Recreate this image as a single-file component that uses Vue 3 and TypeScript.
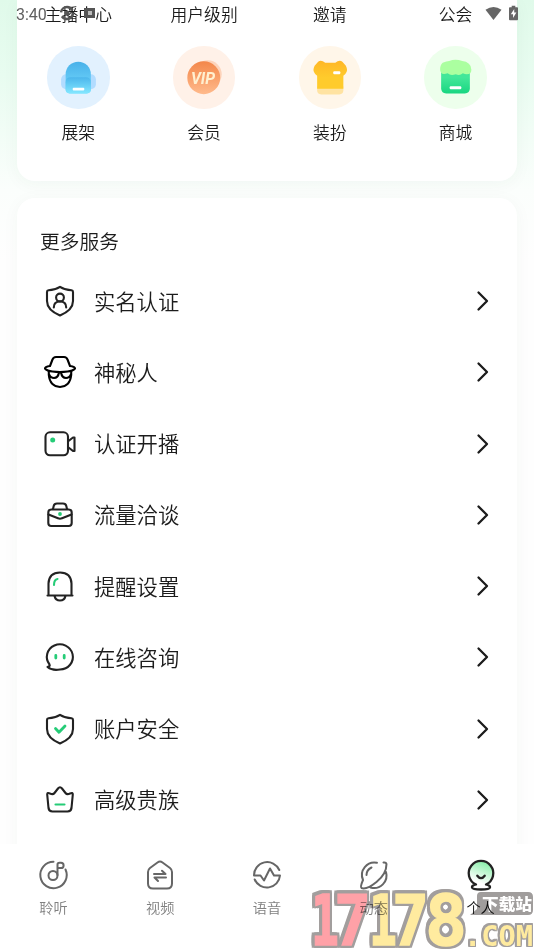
<script setup lang="ts">
interface Service { id: string; label: string }
interface Tab { id: string; label: string; active?: boolean }

const shortcuts: string[] = ['主播中心', '用户级别', '邀请', '公会']
const tools: Service[] = [
  { id: 'shelf', label: '展架' },
  { id: 'vip', label: '会员' },
  { id: 'dress', label: '装扮' },
  { id: 'shop', label: '商城' },
]
const services: Service[] = [
  { id: 'identity', label: '实名认证' },
  { id: 'mystery', label: '神秘人' },
  { id: 'camera', label: '认证开播' },
  { id: 'case', label: '流量洽谈' },
  { id: 'bell', label: '提醒设置' },
  { id: 'chat', label: '在线咨询' },
  { id: 'safe', label: '账户安全' },
  { id: 'crown', label: '高级贵族' },
]
const tabs: Tab[] = [
  { id: 'listen', label: '聆听' },
  { id: 'video', label: '视频' },
  { id: 'voice', label: '语音' },
  { id: 'moments', label: '动态' },
  { id: 'me', label: '个人', active: true },
]
</script>

<template>
  <div class="screen">
    <main class="page">
      <section class="card tools">
        <div class="grid shortcuts">
          <span v-for="s in shortcuts" :key="s">{{ s }}</span>
        </div>
        <div class="grid">
          <div v-for="t in tools" :key="t.id" class="tool">
            <span class="disc" :class="t.id">
              <svg v-if="t.id === 'shelf'" viewBox="0 0 62 62">
                <defs>
                  <linearGradient id="bagA" x1="0" y1="0" x2="0" y2="1"><stop offset="0" stop-color="#48b1e9" /><stop offset="1" stop-color="#78dcff" /></linearGradient>
                  <linearGradient id="bagB" x1="0" y1="0" x2="0" y2="1"><stop offset="0" stop-color="#4cb6ec" /><stop offset="1" stop-color="#83e7ff" /></linearGradient>
                </defs>
                <rect x="14" y="28" width="34.500" height="15" rx="5" fill="#b2dcff" />
                <path d="M18.500 28a12.500 12.500 0 0 1 25 0v15a4 4 0 0 1-4 4h-17a4 4 0 0 1-4-4z" fill="url(#bagA)" />
                <path d="M18.500 36q0-5 5-5h15q5 0 5 5v7a4 4 0 0 1-4 4h-17a4 4 0 0 1-4-4z" fill="url(#bagB)" />
                <rect x="25.500" y="41.300" width="11.500" height="2.800" rx="1" fill="#fff" />
              </svg>
              <svg v-else-if="t.id === 'vip'" viewBox="0 0 62 62">
                <defs><linearGradient id="vipA" x1="0" y1="0" x2="0" y2="1"><stop offset="0" stop-color="#f3874a" /><stop offset="1" stop-color="#ffba8c" /></linearGradient></defs>
                <circle cx="34.500" cy="28" r="13.800" fill="#fdd3ba" />
                <circle cx="30.500" cy="31.500" r="16.300" fill="url(#vipA)" />
                <text x="17.800" y="38" class="vip-text" textLength="24" lengthAdjust="spacingAndGlyphs">VIP</text>
              </svg>
              <svg v-else-if="t.id === 'dress'" viewBox="0 0 62 62">
                <defs><linearGradient id="teeA" x1="0" y1="0" x2="0" y2="1"><stop offset="0" stop-color="#ffb726" /><stop offset=".6" stop-color="#ffcb2c" /></linearGradient></defs>
                <path d="M18 40h26v4q0 4-4 4H22q-4 0-4-4z" fill="#ffe3a2" />
                <path d="M26 16.500h10q4-3 7-1l3.500 4q2 4 .5 6.500-1 2.500-3 3.500v13H18v-13q-2-1-3-3.500-1.500-2.500.5-6.500l3.500-4q3-2 7 1z" fill="url(#teeA)" />
                <rect x="34" y="25" width="7" height="3" rx="1" fill="#fff" />
              </svg>
              <svg v-else viewBox="0 0 62 62">
                <defs><linearGradient id="shopA" x1="0" y1="0" x2="0" y2="1"><stop offset=".35" stop-color="#42e799" /><stop offset="1" stop-color="#19d681" /></linearGradient></defs>
                <path d="M17 23h28.500v19q0 5-5 5H22q-5 0-5-5z" fill="url(#shopA)" />
                <path d="M18.500 16.500q4-1.500 6.500-1.500 6-2.500 13 0 4 0 6.500 2.500 2.500 2 2.500 6 0 4.500-4.500 4.500-2 0-4-1-3 3-7 1-5 2-8-1-7.500 2.500-7.500-4 0-4.500 2.500-6.500z" fill="#abffa0" />
                <rect x="25.500" y="40" width="11.500" height="3" rx="1" fill="#fff" />
              </svg>
            </span>
            <span class="tool-label">{{ t.label }}</span>
          </div>
        </div>
      </section>

      <section class="card services">
        <h2>更多服务</h2>
        <div v-for="s in services" :key="s.id" class="row">
          <svg class="icon" viewBox="0 0 36 36">
            <g v-if="s.id === 'identity'">
              <path d="M18 3.800Q23 7 29.500 7.300 31 7.500 31 9V18q0 9-13 14.500Q5 27 5 18V9q0-1.500 1.500-1.700Q13 7 18 3.800z" />
              <circle cx="18" cy="14.500" r="3.900" /><path d="M11.800 24.500q0-6 6.200-6t6.200 6" />
            </g>
            <g v-else-if="s.id === 'mystery'" class="black">
              <path d="M8 12l2.300-6Q11.300 3 14 3h8q2.700 0 3.700 3l2.300 6q5 .8 5 2.500-2 2.500-7.500 3-7.500 1-15 0Q5 17 3 14.500 3 12.800 8 12z" />
              <path d="M6.800 17v4Q8 32.500 18 33q10-.5 11.200-12v-4M7 20q1.500 4 5 4 4 0 5-5.500h2q1 5.500 5 5.500 3.500 0 5-4" />
            </g>
            <g v-else-if="s.id === 'camera'">
              <rect x="3.500" y="6.300" width="22.500" height="23" rx="4.500" /><path d="M26.500 15l4.500-3.500h1.500v13.500H31l-4.500-3.500" /><circle class="dot" cx="10.700" cy="14" r="2.500" />
            </g>
            <g v-else-if="s.id === 'case'">
              <rect x="6.300" y="12.500" width="23.400" height="16.500" rx="3" /><path d="M11 12l.7-3Q12.300 6.500 15 6.500h6q2.700 0 3.300 2.500l.7 3M6.500 17.500l9.500 3.800q2 .8 4 0l9.500-3.800" /><circle class="dot" cx="18" cy="17" r="1.900" />
            </g>
            <g v-else-if="s.id === 'bell'">
              <path d="M6.500 27V15.500Q7 4.500 18 4.500t11.500 11V27M5.500 27.500h25M12.500 28q1 4.500 5.500 4.500t5.500-4.500" /><path class="green" d="M12 17q0-5.500 3.500-6" />
            </g>
            <g v-else-if="s.id === 'chat'">
              <path d="M7.500 25.500A13 12.600 0 1 1 18 30.500Q10.500 32 5.500 28q3-.8 2-2.500z" /><path class="green thick" d="M13.800 16.500v2.500M22.200 16.500v2.500" />
            </g>
            <g v-else-if="s.id === 'safe'">
              <path d="M18 3.800Q23 7 29.500 7.300 31 7.500 31 9V18q0 9-13 14.500Q5 27 5 18V9q0-1.500 1.500-1.700Q13 7 18 3.800z" /><path class="green thick" d="M13.500 17.500l3.500 3.800 6-6.300" />
            </g>
            <g v-else>
              <path d="M6.500 26L5.200 12.500Q5.200 10 8 11.500q3 1.500 4.500-.5L16 6.500q2-2.500 4 0l3.500 4.500q1.500 2 4.500.5 3-1.500 2.800 1L29.500 26q-.5 3.500-4 3.500h-15Q7 29.500 6.500 26z" /><path class="green" d="M13.500 22.500h9" />
            </g>
          </svg>
          <span class="label">{{ s.label }}</span>
          <svg class="arrow" viewBox="0 0 14 22"><path d="M2.500 2.500l8.500 8.500-8.500 8.500" /></svg>
        </div>
      </section>
    </main>

    <nav class="tabs">
      <div v-for="t in tabs" :key="t.id" class="tab" :class="{ active: t.active }">
        <svg viewBox="0 0 36 36">
          <g v-if="t.id === 'listen'">
            <path d="M18.500 4.800A13.200 13.200 0 1 0 30.500 12.500" /><circle cx="18" cy="18.500" r="4.500" /><path d="M22.500 18V7.500q0-1.700 2-1.700h1.500a2.600 2.600 0 0 1 0 5.200h-3.500" />
          </g>
          <g v-else-if="t.id === 'video'">
            <path d="M6 15q0-2.500 2-4l7.500-5.500q2.500-1.800 5 0L28 11q2 1.500 2 4v11.500q0 5-5 5H11q-5 0-5-5z" /><path d="M12 17h11.500L20 13.700M24 20.500H12.500L16 24" />
          </g>
          <g v-else-if="t.id === 'voice'">
            <path d="M30.300 13A13.200 13.200 0 0 0 5 18.500h6.500l3.500 5 6-12 4 7h6A13.200 13.200 0 0 1 5.700 22.500" />
          </g>
          <g v-else-if="t.id === 'moments'">
            <path d="M21 5.800A12.500 12.500 0 0 0 7 23Q4 30 5.500 31q5 2 15-6T30.500 7q-.5-2-3-1.500M30 15A12.500 12.500 0 0 1 14.500 30.500M10.500 18q0-5 5-7.500" />
          </g>
          <g v-else>
            <defs><linearGradient id="meA" x1=".7" y1="0" x2=".4" y2=".9"><stop offset="0" stop-color="#83efa5" /><stop offset=".85" stop-color="#fff" /></linearGradient></defs>
            <path d="M13 27.500A12.300 12.300 0 1 1 23 27.500q4.500 1 4 3-.5 2-9 2t-9-2q-.5-2 4-3z" fill="url(#meA)" /><path d="M14.300 18.700q3.700 5 7.400 0" />
          </g>
        </svg>
        <span>{{ t.label }}</span>
      </div>
    </nav>

    <header class="status">
      <span class="clock">3:40</span>
      <svg class="notes" viewBox="0 0 38 18">
        <circle cx="8" cy="9" r="6" fill="none" stroke="#555" stroke-width="2.500" stroke-dasharray="15 4" /><circle cx="8" cy="9" r="2.500" fill="#555" />
        <path d="M25 4h11v10H25z" fill="#555" /><path d="M29 7h4v4h-4z" fill="#bbb" />
      </svg>
      <span class="spacer"></span>
      <svg class="wifi" viewBox="0 0 18 15"><path d="M.5 3.500Q9-2.500 17.500 3.500L9 14.500z" fill="#666" /></svg>
      <svg class="battery" viewBox="0 0 10 16"><path d="M1 1.500h2V0h4v1.500h2q1 0 1 1V15q0 1-1 1H1q-1 0-1-1V2.500q0-1 1-1z" fill="#666" /><path d="M5.800 3.500L2 9.500h2.500v4l3.700-6H5.800z" fill="#fff" /></svg>
    </header>

    <svg class="watermark" viewBox="0 0 226 61">
      <path d="M173 3h47q5 0 5 5v13q0 5-5 5h-58l7-6V7q0-4 4-4z" class="badge" />
      <g class="digits">
        <g class="outlined"><text class="red" x="3" y="56" textLength="28" lengthAdjust="spacingAndGlyphs">1</text></g>
        <g class="outlined"><text class="red" x="26" y="56" textLength="37" lengthAdjust="spacingAndGlyphs">7</text></g>
        <g class="outlined"><text x="61" y="56" textLength="28" lengthAdjust="spacingAndGlyphs">1</text></g>
        <g class="outlined"><text x="84" y="56" textLength="37" lengthAdjust="spacingAndGlyphs">7</text></g>
        <g class="outlined"><text x="117" y="56" textLength="42" lengthAdjust="spacingAndGlyphs">8</text></g>
      </g>
      <g class="outlined thin"><text class="com" x="156" y="57" textLength="69" lengthAdjust="spacingAndGlyphs">.COM</text></g>
      <text class="site" x="174" y="20.500" textLength="50" lengthAdjust="spacingAndGlyphs">下载站</text>
    </svg>
  </div>
</template>

<style>
html, body { margin: 0; overflow: hidden; }
</style>

<style scoped>
.screen { position: relative; box-sizing: border-box; width: 534px; height: 950px; overflow: hidden; display: flex; flex-direction: column; background: linear-gradient(180deg, #e0faea 0, #e8fcf0 75px, #fbfefc 190px, #fefefe 260px); font-family: "Noto Sans CJK SC", sans-serif; font-weight: 350; color: #1c1c1c; }
.page { flex: none; height: 844px; padding: 0 17px; overflow: hidden; box-sizing: border-box; }
.card { background: #fff; box-shadow: 0 3px 18px rgba(30, 70, 50, .04); }
.tools { height: 181px; border-radius: 0 0 18px 18px; box-sizing: border-box; }
.grid { display: grid; grid-template-columns: repeat(4, 1fr); margin: 0 -1.500px; text-align: center; }
.shortcuts { height: 46px; line-height: 28px; font-size: 16.800px; }
.tool { display: flex; flex-direction: column; align-items: center; }
.disc { width: 62.500px; height: 62.500px; border-radius: 50%; }
.disc svg { display: block; width: 100%; height: 100%; }
.shelf { background: #e2f1fe; }
.vip { background: #fff1e8; }
.dress { background: #fff6e9; }
.shop { background: #edffec; }
.vip-text { font: italic 700 15.500px Roboto, sans-serif; fill: #fff0d0; }
.tool-label { margin-top: 11px; line-height: 25px; font-size: 16.800px; }
.services { margin-top: 17px; height: 700px; border-radius: 18px 18px 0 0; padding: 0 23px; }
h2 { margin: 0; height: 67.400px; line-height: 85px; font-size: 19.800px; font-weight: inherit; }
.row { height: 71.250px; display: flex; align-items: center; }
.icon { width: 36px; height: 36px; margin-left: 2px; fill: none; stroke: #222; stroke-width: 2.100; stroke-linecap: round; stroke-linejoin: round; }
.black { stroke: #000; }
.icon .dot { fill: #25cc77; stroke: none; }
.icon .green { stroke: #25cc77; }
.icon .thick { stroke-width: 2.800; }
.label { margin-left: 16px; flex: 1; font-size: 21.300px; line-height: 32px; padding-bottom: 1px; }
.arrow { width: 14px; height: 22px; margin-right: 4px; fill: none; stroke: #1c1c1c; stroke-width: 2.300; stroke-linecap: round; stroke-linejoin: round; }
.tabs { height: 106px; display: grid; grid-template-columns: repeat(5, 1fr); background: #fff; }
.tab { display: flex; flex-direction: column; align-items: center; padding-top: 13px; font-size: 14.200px; line-height: 22px; color: #808080; }
.tab svg { width: 36px; height: 36px; margin-bottom: 3px; fill: none; stroke: #666; stroke-width: 2; stroke-linecap: round; stroke-linejoin: round; }
.tab.active { color: #111; }
.tab.active svg { stroke: #222; stroke-width: 2.300; }
.status { position: absolute; inset: 0 0 auto; height: 26px; padding: 0 16px; display: flex; align-items: center; }
.clock { width: 32px; padding-top: 3px; font: 16px/28px Roboto, sans-serif; color: #606060; }
.notes { width: 38px; height: 18px; margin-left: 11px; }
.spacer { flex: 1; }
.wifi { width: 17px; height: 15px; margin-right: 7px; }
.battery { width: 9px; height: 16px; }
.watermark { position: absolute; left: 308px; top: 889px; width: 226px; height: 61px; mix-blend-mode: multiply; }
.badge { fill: #a09d9c; }
.outlined { filter: drop-shadow(2.500px 0 0 #a29e9d) drop-shadow(-2.500px 0 0 #a29e9d) drop-shadow(0 2.500px 0 #a29e9d) drop-shadow(0 -2.500px 0 #a29e9d); }
.thin { filter: drop-shadow(1.500px 0 0 #a29e9d) drop-shadow(-1.500px 0 0 #a29e9d) drop-shadow(0 1.500px 0 #a29e9d) drop-shadow(0 -1.500px 0 #a29e9d); }
.digits text { font: 700 69px "DejaVu Sans Mono", monospace; fill: #ffeb9f; stroke: #ffeb9f; stroke-width: 1.500; }
.digits .red { fill: #ffa1a7; stroke: #ffa1a7; }
.com { font: 700 28px "DejaVu Sans Mono", monospace; fill: #ffeb9f; }
.site { font: 900 15.500px "Noto Sans CJK SC", sans-serif; fill: #fff; }
</style>
